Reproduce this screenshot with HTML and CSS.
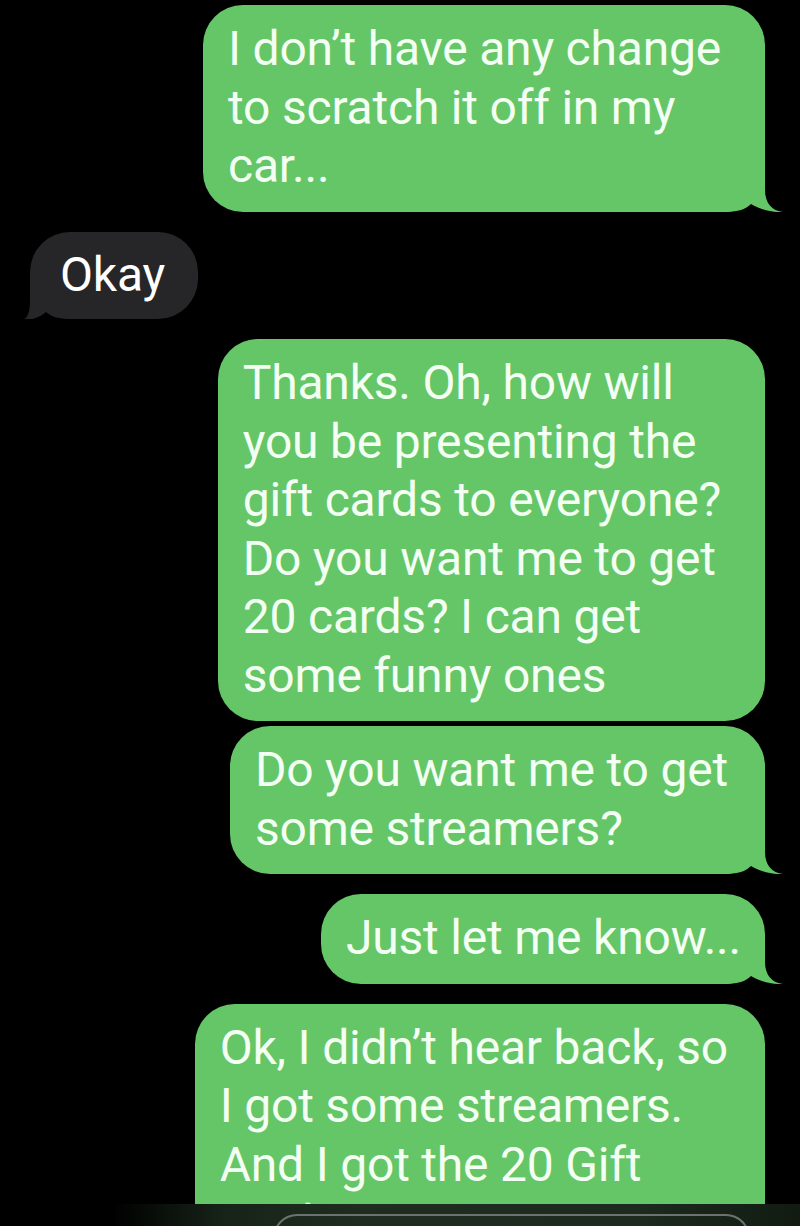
FILE: index.html
```html
<!DOCTYPE html>
<html lang="en">
<head>
<meta charset="utf-8">
<title>Messages</title>
<link rel="stylesheet" href="styles.css">
</head>
<body>
<div class="screen">
  <div class="thread">
    <div class="bubble sent wrap wide"><span class="txt">I don’t have any change<br>to scratch it off in my<br>car...</span>
      <svg class="tail tail-sent" width="60" height="44" viewBox="-42 -44 60 44"><path d="M -42 -44 L 0 -44 L 0 -22 C 0 -9, 7 -1, 18 0 C 8 0.5, -4 -2, -14 -8 C -20 -2, -28 0, -42 0 Z"/></svg>
    </div>
    <div class="bubble recv"><span class="txt">Okay</span>
      <svg class="tail tail-recv" width="60" height="44" viewBox="-18 -44 60 44"><path d="M 42 -44 L 0 -44 L 0 -22 C 0 -9, -1 -1, -8 1 C 2 1.5, 10 -2, 16 -7 C 22 -2, 28 0, 42 0 Z"/></svg>
    </div>
    <div class="bubble sent wrap wide"><span class="txt">Thanks. Oh, how will<br>you be presenting the<br>gift cards to everyone?<br>Do you want me to get<br>20 cards? I can get<br>some funny ones</span></div>
    <div class="bubble sent wrap stacked"><span class="txt">Do you want me to get<br>some streamers?</span>
      <svg class="tail tail-sent" width="60" height="44" viewBox="-42 -44 60 44"><path d="M -42 -44 L 0 -44 L 0 -22 C 0 -9, 7 -1, 18 0 C 8 0.5, -4 -2, -14 -8 C -20 -2, -28 0, -42 0 Z"/></svg>
    </div>
    <div class="bubble sent"><span class="txt">Just let me know...</span>
      <svg class="tail tail-sent" width="60" height="44" viewBox="-42 -44 60 44"><path d="M -42 -44 L 0 -44 L 0 -22 C 0 -9, 7 -1, 18 0 C 8 0.5, -4 -2, -14 -8 C -20 -2, -28 0, -42 0 Z"/></svg>
    </div>
    <div class="bubble sent wrap"><span class="txt">Ok, I didn’t hear back, so<br>I got some streamers.<br>And I got the 20 Gift<br>cards, just in case.</span></div>
  </div>
  <div class="composer">
    <div class="field"></div>
  </div>
</div>
</body>
</html>
```

FILE: styles.css
```css
html, body {
  margin: 0;
  padding: 0;
  background: #000;
}

.screen {
  position: relative;
  width: 800px;
  height: 1226px;
  overflow: hidden;
  background: #000;
  font-family: Roboto, "Liberation Sans", sans-serif;
}

.thread {
  display: flex;
  flex-direction: column;
  align-items: flex-end;
  gap: 20px;
  padding: 5px 35px 0 30px;
}

.bubble {
  position: relative;
  box-sizing: border-box;
  padding: 15px 24px 16px 25px;
  border-radius: 40px;
  font-size: 48px;
  line-height: 58.5px;
  letter-spacing: -0.2px;
  white-space: nowrap;
  color: #f3fff3;
}

.bubble.wrap {
  padding-right: 37px;
}

.bubble.wrap.wide {
  padding-right: 44px;
}

.txt {
  position: relative;
  z-index: 1;
}

.bubble.sent {
  background: #65c667;
}

.bubble.recv {
  align-self: flex-start;
  background: #262628;
  color: #fff;
  padding: 14px 33px 15px 30px;
}

.bubble.stacked {
  margin-top: -15px;
}

.tail {
  position: absolute;
  bottom: 0;
  z-index: 0;
}

.tail-sent {
  right: -18px;
  fill: #65c667;
}

.tail-recv {
  left: -18px;
  fill: #262628;
}

.composer {
  position: absolute;
  left: 0;
  right: 0;
  bottom: 0;
  height: 22px;
  background: linear-gradient(to right, #000 14%, #172318 28%, #1f2d21 45%, #1d2a1f 80%, #111b12 100%);
  padding: 10px 50px 0 273px;
  box-sizing: border-box;
  z-index: 2;
}

.field {
  height: 30px;
  border: 2px solid #6c726d;
  border-bottom: none;
  border-radius: 24px 24px 0 0;
}
```
